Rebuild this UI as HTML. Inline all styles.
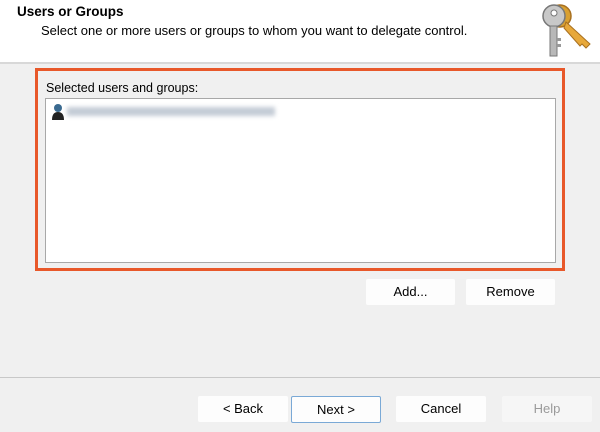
<!DOCTYPE html>
<html><head><style>
body{margin:0;width:600px;height:432px;overflow:hidden;background:#f0f0f0;font-family:"Liberation Sans",Arial,sans-serif;font-size:12px;color:#000;position:relative}
.a{position:absolute}
.btn{position:absolute;background:#fdfdfd;text-align:center;line-height:26px;font-size:13px;height:26px;border-radius:2px}
</style></head><body>
<div class="a" style="left:0;top:0;width:600px;height:62px;background:#fff"></div>
<div class="a" style="left:0;top:62px;width:600px;height:2px;background:#d8d8d8"></div>
<div class="a" style="left:17px;top:4px;font-weight:bold;font-size:13.5px">Users or Groups</div>
<div class="a" style="left:41px;top:23px;font-size:13px">Select one or more users or groups to whom you want to delegate control.</div>
<svg class="a" style="left:538px;top:2px" width="60" height="56" viewBox="0 0 60 56">
<circle cx="22" cy="14" r="11" fill="#d9a030" stroke="#a87020" stroke-width="1.5"/>
<path d="M28 20 L52 42 L48 46 L44 42 L42 44 L26 26Z" fill="#e7a83a" stroke="#a87020"/>
<circle cx="16" cy="14" r="11" fill="#c8c8c8" stroke="#777" stroke-width="1.5"/>
<circle cx="16" cy="11" r="3" fill="#fff" stroke="#777"/>
<rect x="12" y="24" width="7" height="30" fill="#b8b8b8" stroke="#777"/>
<rect x="19" y="36" width="4" height="3" fill="#999"/><rect x="19" y="42" width="4" height="3" fill="#999"/>
</svg>
<div class="a" style="left:35px;top:68px;width:524px;height:197px;border:3px solid #e8582a"></div>
<div class="a" style="left:46px;top:81px;font-size:12.5px">Selected users and groups:</div>
<div class="a" style="left:45px;top:98px;width:509px;height:163px;background:#fff;border:1px solid #a8a8a8"></div>
<svg class="a" style="left:51px;top:103px" width="14" height="17"><circle cx="7" cy="5" r="4" fill="#3a6a90"/><path d="M1 17 Q1 9 7 9 Q13 9 13 17Z" fill="#222"/></svg>
<div class="a" style="left:67px;top:107px;width:208px;height:9px;background:#c4ccd6;filter:blur(2px)"></div>
<div class="btn" style="left:366px;top:279px;width:89px">Add...</div>
<div class="btn" style="left:466px;top:279px;width:89px">Remove</div>
<div class="a" style="left:0;top:377px;width:600px;height:1px;background:#c8c8c8"></div>
<div class="btn" style="left:198px;top:396px;width:90px">&lt; Back</div>
<div class="btn" style="left:291px;top:396px;width:88px;border:1px solid #7aa9d6;height:25px;line-height:25px">Next &gt;</div>
<div class="btn" style="left:396px;top:396px;width:90px">Cancel</div>
<div class="btn" style="left:502px;top:396px;width:90px;background:#f6f6f6;color:#9a9a9a">Help</div>
</body></html>
